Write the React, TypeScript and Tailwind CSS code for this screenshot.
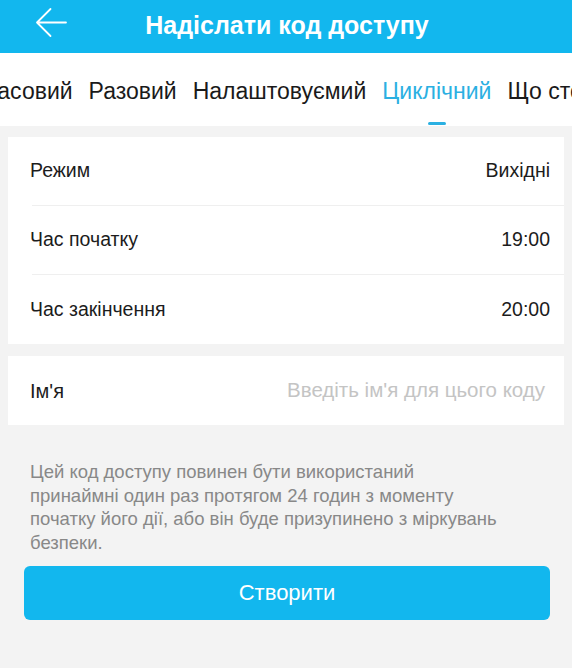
import React from "react";

export default function App() {
  const tabs = ["Часовий", "Разовий", "Налаштовуємий", "Циклічний", "Що стосується"];
  const note = [
    "Цей код доступу повинен бути використаний",
    "принаймні один раз протягом 24 годин з моменту",
    "початку його дії, або він буде призупинено з міркувань",
    "безпеки.",
  ];
  return (
    <div className="w-[572px] h-[668px] bg-[#f3f3f3] overflow-hidden" style={{ fontFamily: "'Liberation Sans', Arial, sans-serif" }}>
      <div className="h-[53px] bg-[#12b7ee] flex items-center relative">
        <svg className="absolute left-[35px] top-[7px]" width="33" height="31" viewBox="0 0 33 31" fill="none">
          <path d="M2 15.5 H31 M15.5 2 L2 15.5 L15.5 29" stroke="white" strokeWidth="1.8" strokeLinecap="round" strokeLinejoin="round" />
        </svg>
        <div className="w-full text-center text-white font-bold text-[25px] pl-[2px] pb-[1px]">Надіслати код доступу</div>
      </div>
      <div className="h-[73px] bg-white overflow-hidden">
        <div className="flex whitespace-nowrap gap-[16px] text-[23px] text-[#1a1a1a] -ml-[18px] pt-[24px]">
          {tabs.map((t) => (
            <div key={t} className={"flex flex-col items-center " + (t === "Циклічний" ? "text-[#2bb0e2]" : "")}>
              <span className="leading-[28px]">{t}</span>
              {t === "Циклічний" ? <div className="mt-[17px] w-[18px] h-[3px] bg-[#2bb0e2] rounded-full" /> : null}
            </div>
          ))}
        </div>
      </div>
      <div className="px-[8px] pt-[11px]">
        <div className="bg-white">
          {[
            ["Режим", "Вихідні"],
            ["Час початку", "19:00"],
            ["Час закінчення", "20:00"],
          ].map(([l, r], i) => (
            <div key={l} className="pl-[24px]">
              <div className={"h-[69px] flex items-center justify-between pr-[14px] text-[19.5px] text-[#1c1c1c] " + (i < 2 ? "border-b border-[#efefef]" : "")}>
                <span className="-ml-[2px]">{l}</span>
                <span>{r}</span>
              </div>
            </div>
          ))}
        </div>
        <div className="bg-white mt-[12px] h-[69px] flex items-center justify-between pl-[22px] pr-[19px]">
          <span className="text-[#1c1c1c] text-[20px]">Ім'я</span>
          <span className="text-[#c4c4c4] text-[20.5px]">Введіть ім'я для цього коду</span>
        </div>
        <div className="ml-[22px] pt-[35px] text-[18.5px] leading-[23.7px] text-[#888888] whitespace-nowrap">
          {note.map((l) => (
            <div key={l}>{l}</div>
          ))}
        </div>
        <div className="ml-[16px] mr-[14px] mt-[11px] h-[54px] rounded-[6px] bg-[#12b7ee] flex items-center justify-center text-white text-[22px]">
          Створити
        </div>
      </div>
    </div>
  );
}
